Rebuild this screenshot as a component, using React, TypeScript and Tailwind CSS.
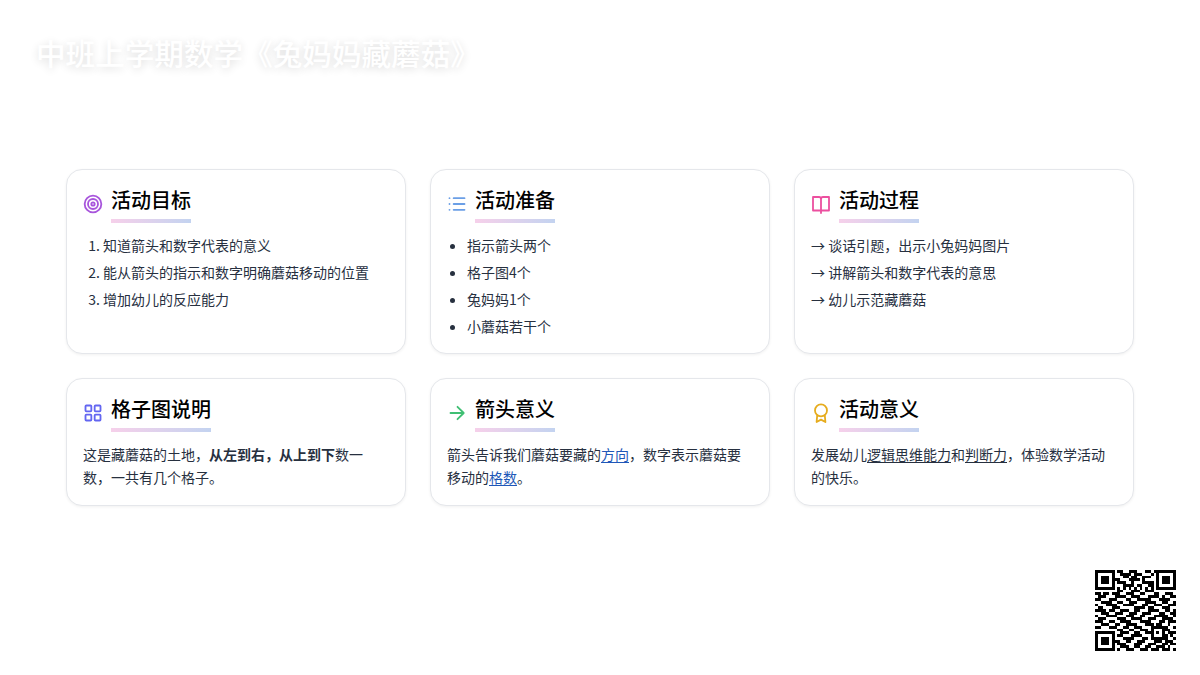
import type { ReactNode } from 'react'
import { LayoutGrid, List, Target } from 'lucide-react'

const QR_ROWS = [
  '11111110110011100011011111111',
  '10000010011110111000101000001',
  '10111010001101100111001011101',
  '10111011100011110100001011101',
  '10111010111001000111101011101',
  '10000010001111011001101000001',
  '11111110101010101010101111111',
  '00000000110001110011100000000',
  '11011011100111001100011001110',
  '01110001111001110001111010011',
  '11000111000110011111000111100',
  '00111100110011100011110011001',
  '10001111001111000110011100111',
  '01100011100000111101100011100',
  '11110110011100110001111001101',
  '00111001110011100111000110011',
  '10001111000111001100011111001',
  '01110000111001111001110011110',
  '11100110011110001111000110111',
  '00111001100111100011101100100',
  '11000111001100111000111111001',
  '00000000110011001110100011100',
  '11111110011100110011101010111',
  '10000010110001111000100011010',
  '10111010001111000110111111001',
  '10111011100110011100011101110',
  '10111010111000111001110011011',
  '10000010011100110011001110100',
  '11111110100111001110111011101',
]

function QrCode() {
  return (
    <svg viewBox="0 0 29 29" className="absolute left-[1095px] top-[570px] h-[81px] w-[81px]" shapeRendering="crispEdges">
      {QR_ROWS.map((row, y) =>
        row.split('').map((cell, x) => (cell === '1' ? <rect key={`${x}-${y}`} x={x} y={y} width={1} height={1} fill="#000" /> : null)),
      )}
    </svg>
  )
}

function BookIcon() {
  return (
    <svg width="20" height="20" viewBox="0 0 20 20" fill="none" stroke="#ec4f9f" strokeWidth="1.8" strokeLinejoin="round" strokeLinecap="round">
      <path d="M2 3h6a2 2 0 0 1 2 2v14M18 3h-6a2 2 0 0 0-2 2M2 3v13.5h8M18 3v13.5h-8" />
    </svg>
  )
}

function ArrowIcon() {
  return (
    <svg width="20" height="20" viewBox="0 0 20 20" fill="none" stroke="#3fbf73" strokeWidth="1.8" strokeLinejoin="round" strokeLinecap="round">
      <path d="M3.5 10h13M10.5 3.8 16.7 10l-6.2 6.2" />
    </svg>
  )
}

function RibbonIcon() {
  return (
    <svg width="20" height="20" viewBox="0 0 20 20" fill="none" stroke="#e6ac1e" strokeWidth="1.8" strokeLinejoin="round" strokeLinecap="round">
      <circle cx="10" cy="7.4" r="6" />
      <path d="M6.2 12.5 5.6 19l4.4-2.4 4.4 2.4-.6-6.5" />
    </svg>
  )
}

function Card({ icon, title, children }: { icon: ReactNode; title: string; children: ReactNode }) {
  return (
    <div className="rounded-2xl border border-[#e5e7eb] bg-white px-4 pt-[17px] shadow-[0_1px_3px_rgba(0,0,0,0.06)]">
      <div className="flex items-center gap-2">
        <span className="mb-[2px] flex shrink-0">{icon}</span>
        <div>
          <h2 className="text-[20px] font-medium leading-[26px] text-black">{title}</h2>
          <div className="mt-[6px] h-1 bg-gradient-to-r from-[#f6d0ea] to-[#c3d3f0]" />
        </div>
      </div>
      {children}
    </div>
  )
}

export default function App() {
  return (
    <div className="relative h-[675px] w-[1200px] overflow-hidden bg-white font-['Noto_Sans_CJK_SC','Noto_Sans',sans-serif] text-[14px] text-[#27303f]">
      <h1 className="px-9 pt-[32px] text-[29.6px] font-medium leading-[42px] text-white [text-shadow:0_2px_8px_rgba(0,0,0,0.14)]">
        中班上学期数学《兔妈妈藏蘑菇》
      </h1>
      <div className="mt-[95px] grid grid-cols-3 grid-rows-[185px_128px] gap-6 px-[66px]">
        <Card icon={<Target size={20} strokeWidth={2.2} className="text-[#a855dc]" />} title="活动目标">
          <ol className="mt-[9px] list-decimal pl-5 leading-[27px]">
            <li>知道箭头和数字代表的意义</li>
            <li>能从箭头的指示和数字明确蘑菇移动的位置</li>
            <li>增加幼儿的反应能力</li>
          </ol>
        </Card>
        <Card icon={<List size={20} strokeWidth={2.2} className="text-[#6b9fe6]" />} title="活动准备">
          <ul className="mt-[9px] list-disc pl-5 leading-[27px]">
            <li>指示箭头两个</li>
            <li>格子图4个</li>
            <li>兔妈妈1个</li>
            <li>小蘑菇若干个</li>
          </ul>
        </Card>
        <Card icon={<BookIcon />} title="活动过程">
          <div className="mt-[9px] leading-[27px]">
            <p>→ 谈话引题，出示小兔妈妈图片</p>
            <p>→ 讲解箭头和数字代表的意思</p>
            <p>→ 幼儿示范藏蘑菇</p>
          </div>
        </Card>
        <Card icon={<LayoutGrid size={20} strokeWidth={2.2} className="text-[#6366f1]" />} title="格子图说明">
          <p className="mt-[11px] leading-[23px]">
            这是藏蘑菇的土地，<strong className="font-bold">从左到右，从上到下</strong>数一数，一共有几个格子。
          </p>
        </Card>
        <Card icon={<ArrowIcon />} title="箭头意义">
          <p className="mt-[11px] leading-[23px]">
            箭头告诉我们蘑菇要藏的<span className="text-[#2057b8] underline underline-offset-2">方向</span>，数字表示蘑菇要移动的
            <span className="text-[#2057b8] underline underline-offset-2">格数</span>。
          </p>
        </Card>
        <Card icon={<RibbonIcon />} title="活动意义">
          <p className="mt-[11px] leading-[23px]">
            发展幼儿<span className="underline underline-offset-2">逻辑思维能力</span>和<span className="underline underline-offset-2">判断力</span>，体验数学活动的快乐。
          </p>
        </Card>
      </div>
      <QrCode />
    </div>
  )
}
